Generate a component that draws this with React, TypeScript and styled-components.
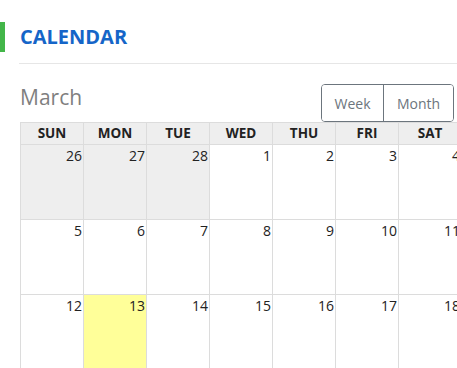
import React from "react";
import styled, { createGlobalStyle } from "styled-components";

const GlobalStyle = createGlobalStyle`
  html, body {
    margin: 0;
    padding: 0;
    overflow: hidden;
    background: #fff;
    font-family: "Open Sans", "Liberation Sans", sans-serif;
  }
`;

const DAYS = ["SUN", "MON", "TUE", "WED", "THU", "FRI", "SAT"];

type Cell = { day: number; other?: boolean; today?: boolean };

const weeks: Cell[][] = [
  [
    { day: 26, other: true },
    { day: 27, other: true },
    { day: 28, other: true },
    { day: 1 },
    { day: 2 },
    { day: 3 },
    { day: 4 },
  ],
  [5, 6, 7, 8, 9, 10, 11].map((d) => ({ day: d })),
  [12, 13, 14, 15, 16, 17, 18].map((d) => ({ day: d, today: d === 13 })),
];

export default function App() {
  return (
    <>
      <GlobalStyle />
      <Page>
        <Header>
          <Marker />
          <Title>CALENDAR</Title>
        </Header>
        <Divider />
        <Toolbar>
          <MonthName>March</MonthName>
          <ViewGroup>
            <ViewBtn $w={61}>Week</ViewBtn>
            <ViewBtn $w={69}>Month</ViewBtn>
          </ViewGroup>
        </Toolbar>
        <Grid>
          {DAYS.map((d) => (
            <HeadCell key={d}>{d}</HeadCell>
          ))}
          {weeks.flat().map((c, i) => (
            <DayCell key={i} $other={c.other} $today={c.today}>
              {c.day}
            </DayCell>
          ))}
        </Grid>
      </Page>
    </>
  );
}

/* ===== styled components ===== */

const Page = styled.div`
  width: 480px;
  padding-top: 22px;
`;

const Header = styled.div`
  display: flex;
  align-items: center;
  gap: 15px;
  height: 30px;
`;

const Marker = styled.div`
  width: 5px;
  height: 30px;
  background: #43b649;
`;

const Title = styled.h1`
  margin: 0;
  font-size: 20px;
  font-weight: 700;
  color: #1565c8;
  line-height: 30px;
`;

const Divider = styled.div`
  margin: 11px 0 0 19px;
  height: 1px;
  background: #e6e6e6;
`;

const Toolbar = styled.div`
  display: flex;
  justify-content: space-between;
  width: 434px;
  margin: 20px 0 0 20px;
  height: 38px;
`;

const MonthName = styled.div`
  font-size: 21px;
  color: #7f7f7f;
  line-height: 28px;
  margin-top: -1px;
`;

const ViewGroup = styled.div`
  display: flex;
  height: 38px;
  border: 1px solid #6c757d;
  border-radius: 4px;
  overflow: hidden;
  box-sizing: border-box;
`;

const ViewBtn = styled.button<{ $w: number }>`
  width: ${(p) => p.$w}px;
  font-family: inherit;
  font-size: 14px;
  color: #6c757d;
  background: #fff;
  border: none;
  padding: 0;
  & + & {
    width: ${(p) => p.$w + 1}px;
    border-left: 1px solid #6c757d;
  }
`;

const Grid = styled.div`
  display: grid;
  grid-template-columns: repeat(7, 63px);
  margin-left: 20px;
  border-left: 1px solid #dcdcdc;
  border-top: 1px solid #dcdcdc;
  width: max-content;
`;

const HeadCell = styled.div`
  height: 21px;
  border-right: 1px solid #dcdcdc;
  border-bottom: 1px solid #dcdcdc;
  background: #eeeeee;
  font-size: 13.5px;
  font-weight: 700;
  color: #222;
  text-align: center;
  line-height: 21px;
`;

const DayCell = styled.div<{ $other?: boolean; $today?: boolean }>`
  height: 73px;
  border-right: 1px solid #dcdcdc;
  border-bottom: 1px solid #dcdcdc;
  background: ${(p) => (p.$today ? "#ffff99" : p.$other ? "#eeeeee" : "#fff")};
  font-size: 14px;
  color: #222;
  text-align: right;
  padding-right: 1px;
  padding-top: 1px;
  line-height: 19px;
`;
